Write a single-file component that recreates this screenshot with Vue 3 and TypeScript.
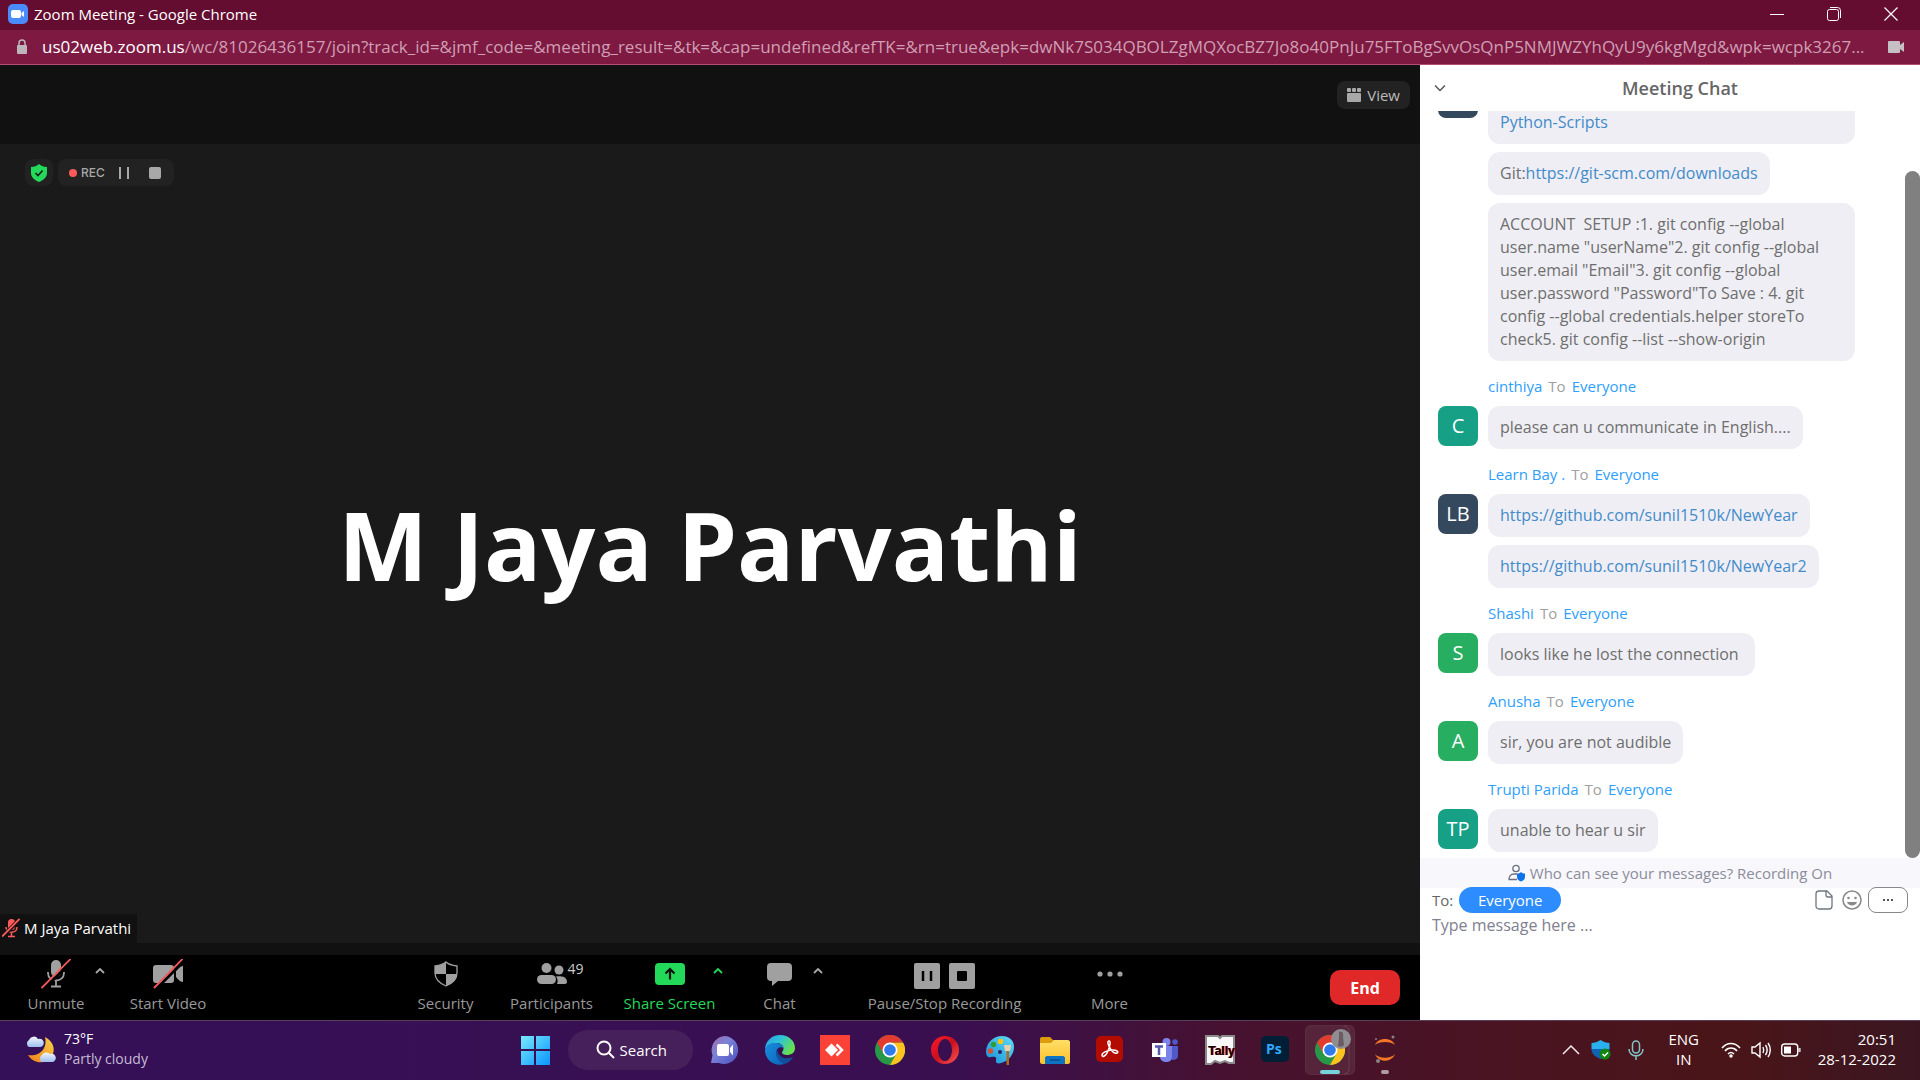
<script setup lang="ts">
import { ref } from 'vue'

interface Part {
  text: string
  href?: string
}
interface Message {
  from?: string
  initials: string
  color: string
  bubbles: Part[][]
  clipped?: boolean
}

const draft = ref('')

const messages: Message[] = [
  {
    initials: '',
    color: '#34495e',
    clipped: true,
    bubbles: [[{ text: 'Python-Scripts', href: '#python-scripts' }]],
  },
  {
    initials: '',
    color: 'transparent',
    bubbles: [
      [{ text: 'Git:' }, { text: 'https://git-scm.com/downloads', href: 'https://git-scm.com/downloads' }],
      [
        {
          text: 'ACCOUNT  SETUP :1. git config --global user.name "userName"2. git config --global user.email "Email"3. git config --global user.password "Password"To Save : 4. git config --global credentials.helper storeTo check5. git config --list --show-origin',
        },
      ],
    ],
  },
  { from: 'cinthiya', initials: 'C', color: '#16a085', bubbles: [[{ text: 'please can u communicate in English....' }]] },
  {
    from: 'Learn Bay .',
    initials: 'LB',
    color: '#34495e',
    bubbles: [
      [{ text: 'https://github.com/sunil1510k/NewYear', href: 'https://github.com/sunil1510k/NewYear' }],
      [{ text: 'https://github.com/sunil1510k/NewYear2', href: 'https://github.com/sunil1510k/NewYear2' }],
    ],
  },
  { from: 'Shashi', initials: 'S', color: '#27ae60', bubbles: [[{ text: 'looks like he lost the connection ' }]] },
  { from: 'Anusha', initials: 'A', color: '#27ae60', bubbles: [[{ text: 'sir, you are not audible' }]] },
  { from: 'Trupti Parida', initials: 'TP', color: '#16a085', bubbles: [[{ text: 'unable to hear u sir' }]] },
]
</script>

<template>
  <div class="screen">
    <header class="titlebar">
      <svg class="app-icon" viewBox="0 0 20 20" width="20" height="20">
        <rect width="20" height="20" rx="5" fill="#4a8cff" />
        <rect x="3" y="6" width="10" height="8" rx="2" fill="#fff" />
        <path d="M13.500 9 16 7v6l-2.500-2z" fill="#fff" />
      </svg>
      <span class="window-title">Zoom Meeting - Google Chrome</span>
      <div class="window-controls">
        <button aria-label="Minimize">
          <svg viewBox="0 0 14 14" width="14" height="14"><path d="M0 7.500h14" stroke="#fff" /></svg>
        </button>
        <button aria-label="Restore">
          <svg viewBox="0 0 14 14" width="14" height="14" fill="none" stroke="#fff">
            <rect x=".5" y="2.500" width="11" height="11" rx="2" />
            <path d="M3 .500h7.500a3 3 0 0 1 3 3V11" />
          </svg>
        </button>
        <button aria-label="Close">
          <svg viewBox="0 0 14 14" width="14" height="14"><path d="M.5.5l13 13M13.500.500l-13 13" stroke="#fff" stroke-width="1.200" /></svg>
        </button>
      </div>
    </header>

    <div class="urlbar">
      <svg viewBox="0 0 12 16" width="12" height="16">
        <rect x="1" y="6" width="10" height="9" rx="1" fill="#bdb5ba" />
        <path d="M3 6V4a3 3 0 0 1 6 0v2" fill="none" stroke="#bdb5ba" stroke-width="1.500" />
      </svg>
      <div class="url"><b>us02web.zoom.us</b>/wc/81026436157/join?track_id=&amp;jmf_code=&amp;meeting_result=&amp;tk=&amp;cap=undefined&amp;refTK=&amp;rn=true&amp;epk=dwNk7S034QBOLZgMQXocBZ7Jo8o40PnJu75FToBgSvvOsQnP5NMJWZYhQyU9y6kgMgd&amp;wpk=wcpk3267...</div>
      <svg class="cam" viewBox="0 0 16 12" width="16" height="12">
        <path d="M1 0h10a1 1 0 0 1 1 1v3l4-3v10l-4-3v3a1 1 0 0 1-1 1H1a1 1 0 0 1-1-1V1a1 1 0 0 1 1-1z" fill="#c6c0c4" />
      </svg>
    </div>

    <main class="meeting">
      <section class="stage">
        <div class="stage-top">
          <button class="view-button">
            <svg viewBox="0 0 14 14" width="14" height="14" fill="#a8a8a8">
              <rect width="4" height="4" rx="1" /><rect x="5" width="4" height="4" rx="1" /><rect x="10" width="4" height="4" rx="1" />
              <rect y="5" width="14" height="9" rx="1" />
            </svg>
            View
          </button>
        </div>

        <div class="video">
          <div class="chips">
            <button class="chip shield" aria-label="Meeting is encrypted">
              <svg viewBox="0 0 16 18" width="16" height="18">
                <path d="M8 0c2 2 5 3 8 3v6c0 4-3 7-8 9-5-2-8-5-8-9V3c3 0 6-1 8-3z" fill="#23d959" />
                <path d="M4.500 9 7 11.500l4.500-5" fill="none" stroke="#1a1a1a" stroke-width="1.600" />
              </svg>
            </button>
            <div class="chip rec">
              <i class="dot"></i><span>REC</span>
              <button class="pause" aria-label="Pause recording"></button>
              <button class="stop" aria-label="Stop recording"></button>
            </div>
          </div>
          <h1>M Jaya Parvathi</h1>
          <div class="nameplate">
            <svg viewBox="0 0 18 20" width="18" height="20">
              <rect x="6" y="1" width="7" height="11" rx="3.500" fill="#ff5a5a" />
              <path d="M4 9c0 7 11 7 11 0M9.500 14v4M6 18.500h7" fill="none" stroke="#ff5a5a" stroke-width="1.500" />
              <path d="M1 18 17 2" stroke="#111" stroke-width="4" />
              <path d="M0 18.500 17.500 1" stroke="#ff5a5a" stroke-width="1.800" />
            </svg>
            M Jaya Parvathi
          </div>
        </div>

        <nav class="toolbar">
          <div class="tools">
            <button class="tool w80">
              <svg viewBox="0 0 30 30" width="30" height="30" fill="none">
                <rect x="10" y="1" width="10" height="17" rx="5" fill="#a0a0a0" />
                <path d="M7 13v1c0 10 16 10 16 0v-1M15 22v5M10 27.500h10" stroke="#a0a0a0" stroke-width="1.800" />
                <path d="M3 30 31 2" stroke="#000" stroke-width="3" />
                <path d="M.5 29 29.500 0" stroke="#f4595b" stroke-width="1.800" />
              </svg>
              <span>Unmute</span>
            </button>
            <button class="caret after-mute" aria-label="Audio options"><svg viewBox="0 0 10 6" width="10" height="6"><path d="M1 5l4-4 4 4" /></svg></button>
            <button class="tool w100">
              <svg viewBox="0 0 30 30" width="30" height="30">
                <rect x="0" y="6" width="21" height="18" rx="3" fill="#a0a0a0" />
                <path d="M23 12c2-2 4-5 7-5v16c-3 0-5-3-7-5z" fill="#a0a0a0" />
                <path d="M3 30 31 2" stroke="#000" stroke-width="3" />
                <path d="M1 29 29.500 0" stroke="#f4595b" stroke-width="1.800" />
              </svg>
              <span>Start Video</span>
            </button>
          </div>

          <div class="tools middle">
            <button class="tool w80">
              <svg viewBox="0 0 30 30" width="30" height="30">
                <path d="M15 3c3 3 7 3.500 11 4v7c0 6-4 10-11 13C8 24 4 20 4 14V7c4-.5 8-1 11-4z" fill="none" stroke="#a0a0a0" stroke-width="1.300" />
                <path d="M15 3v12H4V7c4-.5 8-1 11-4zM15 15h11c0 6-4 9-11 12z" fill="#a0a0a0" />
              </svg>
              <span>Security</span>
            </button>
            <button class="tool w100 after">
              <svg viewBox="0 0 30 30" width="30" height="30" fill="#a0a0a0">
                <circle cx="9.500" cy="9" r="5" /><circle cx="22" cy="11" r="4.500" />
                <rect x="0" y="16" width="19" height="9" rx="4.500" />
                <path d="M19 17.500c3-.5 6-.5 8 .5 2 1 3 3 3 5 0 1-1 2-2 2h-8c1-2 1-5-1-7.500z" />
              </svg>
              <em class="count">49</em>
              <span>Participants</span>
            </button>
            <button class="tool w100 share after">
              <svg viewBox="0 0 30 30" width="30" height="30">
                <rect y="4" width="30" height="22" rx="4" fill="#23d959" />
                <path d="M15 20.500V10M10.500 14.500 15 10l4.500 4.500" fill="none" stroke="#111" stroke-width="2.200" />
              </svg>
              <span>Share Screen</span>
            </button>
            <button class="caret green" aria-label="Share options"><svg viewBox="0 0 10 6" width="10" height="6"><path d="M1 5l4-4 4 4" /></svg></button>
            <button class="tool w40 chat-tool">
              <svg viewBox="0 0 30 30" width="30" height="30">
                <path d="M6 4h17a4 4 0 0 1 4 4v10a4 4 0 0 1-4 4H13l-6 5v-5H6a4 4 0 0 1-4-4V8a4 4 0 0 1 4-4z" fill="#a0a0a0" />
              </svg>
              <span>Chat</span>
            </button>
            <button class="caret after-chat" aria-label="Chat options"><svg viewBox="0 0 10 6" width="10" height="6"><path d="M1 5l4-4 4 4" /></svg></button>
            <button class="tool w160">
              <svg viewBox="0 0 62 30" width="62" height="30">
                <rect x="0" y="4" width="26" height="26" rx="2" fill="#a0a0a0" />
                <rect x="35" y="4" width="26" height="26" rx="2" fill="#a0a0a0" />
                <path d="M9 12v10M17 12v10" stroke="#000" stroke-width="2.500" />
                <rect x="43" y="12" width="10" height="10" rx="1" fill="#000" />
              </svg>
              <span>Pause/Stop Recording</span>
            </button>
            <button class="tool w50 more">
              <svg viewBox="0 0 30 30" width="30" height="30" fill="#a0a0a0">
                <circle cx="5" cy="15" r="2.600" /><circle cx="15" cy="15" r="2.600" /><circle cx="25" cy="15" r="2.600" />
              </svg>
              <span>More</span>
            </button>
          </div>

          <button class="end">End</button>
        </nav>
      </section>

      <aside class="chat">
        <div class="chat-head">
          <button aria-label="Collapse chat"><svg viewBox="0 0 12 8" width="12" height="8"><path d="M1 1.500l5 5 5-5" fill="none" stroke="#555" stroke-width="1.500" /></svg></button>
          <h2>Meeting Chat</h2>
        </div>

        <div class="chat-body">
          <div class="messages">
            <article v-for="(m, i) in messages" :key="i" class="group">
              <p v-if="m.from" class="sender"><a href="#sender">{{ m.from }}</a><span>To</span><a href="#everyone">Everyone</a></p>
              <div class="row">
                <div class="avatar" :style="{ background: m.color }">{{ m.initials }}</div>
                <div class="bubbles">
                  <div v-for="(b, j) in m.bubbles" :key="j" class="bubble" :class="{ tall: m.clipped }"><template v-for="(p, k) in b" :key="k"><a v-if="p.href" :href="p.href">{{ p.text }}</a><template v-else>{{ p.text }}</template></template></div>
                </div>
              </div>
            </article>
          </div>
          <div class="track"><div class="thumb"></div></div>
        </div>

        <div class="privacy">
          <svg viewBox="0 0 18 18" width="18" height="18">
            <circle cx="8" cy="4.500" r="3.200" fill="none" stroke="#6e6e80" stroke-width="1.300" />
            <path d="M9 10H6c-3 0-5 2-5 5.500h8" fill="none" stroke="#6e6e80" stroke-width="1.300" />
            <path d="M13 8c1 1 2.500 1.500 4 1.500V13c0 2-1.500 3.500-4 4.500-2.500-1-4-2.500-4-4.500V9.500C10.500 9.500 12 9 13 8z" fill="#0e72ed" />
          </svg>
          Who can see your messages? Recording On
        </div>

        <div class="composer">
          <div class="to-row">
            <span>To:</span>
            <button class="pill">Everyone</button>
            <div class="composer-actions">
              <button aria-label="Attach file">
                <svg viewBox="0 0 18 20" width="18" height="20" fill="none" stroke="#6e7680" stroke-width="1.300">
                  <path d="M4 1h8l5 5v10a3 3 0 0 1-3 3H4a3 3 0 0 1-3-3V4a3 3 0 0 1 3-3z" /><path d="M11 1v4a2 2 0 0 0 2 2h4" />
                </svg>
              </button>
              <button class="emoji" aria-label="Emoji">
                <svg viewBox="0 0 20 20" width="20" height="20">
                  <circle cx="10" cy="10" r="9" fill="none" stroke="#8a8a8a" stroke-width="1.600" />
                  <circle cx="6.500" cy="8" r="1.300" fill="#8a8a8a" /><circle cx="13.500" cy="8" r="1.300" fill="#8a8a8a" />
                  <path d="M5 12h10c-1 4.500-9 4.500-10 0z" fill="#8a8a8a" />
                </svg>
              </button>
              <button class="dots" aria-label="More options">
                <svg viewBox="0 0 12 4" width="12" height="4" fill="#555"><rect x="1" y="1" width="2" height="2" /><rect x="5" y="1" width="2" height="2" /><rect x="9" y="1" width="2" height="2" /></svg>
              </button>
            </div>
          </div>
          <textarea v-model="draft" placeholder="Type message here ..." aria-label="Message"></textarea>
        </div>
      </aside>
    </main>

    <footer class="taskbar">
      <button class="weather">
        <svg viewBox="0 0 32 32" width="32" height="32">
          <defs>
            <linearGradient id="moon" x1="0" y1="1" x2="1" y2="0"><stop offset="0" stop-color="#f07f1c" /><stop offset="1" stop-color="#f8d348" /></linearGradient>
            <linearGradient id="cloud" x1="0" y1="0" x2="0" y2="1"><stop offset="0" stop-color="#f2f6fe" /><stop offset="1" stop-color="#9dbdf0" /></linearGradient>
          </defs>
          <path d="M21 3c8 4 11 12 7 19-5 8-18 9-24-1 10 2 20-5 17-18z" fill="url(#moon)" />
          <path d="M5 13a4 4 0 0 1 0-7 5 5 0 0 1 9-1 4 4 0 0 1 3 8z" fill="url(#cloud)" />
          <path d="M18 28a4 4 0 0 1 0-7 5 5 0 0 1 8-1 4 4 0 0 1 3 8z" fill="url(#cloud)" />
        </svg>
        <span class="weather-text"><b>73°F</b><small>Partly cloudy</small></span>
      </button>

      <div class="apps">
        <button class="app" aria-label="Start">
          <svg viewBox="0 0 30 30" width="30" height="30">
            <defs><linearGradient id="win" gradientUnits="userSpaceOnUse" x1="0" y1="0" x2="30" y2="30"><stop offset="0" stop-color="#7deefc" /><stop offset="1" stop-color="#0a93ff" /></linearGradient></defs>
            <path d="M1 1h13v13H1zM16 1h14v13H16zM1 16h13v14H1zM16 16h14v14H16z" fill="url(#win)" />
          </svg>
        </button>
        <button class="search">
          <svg viewBox="0 0 20 20" width="20" height="20" fill="none" stroke="#fff" stroke-width="2"><circle cx="8" cy="8" r="6.500" /><path d="M12.500 12.500 18 18" /></svg>
          Search
        </button>
        <button class="app" aria-label="Chat">
          <svg viewBox="0 0 30 30" width="30" height="30">
            <defs><linearGradient id="tc" x1="0" y1="0" x2="1" y2="1"><stop offset="0" stop-color="#a46aa8" /><stop offset=".4" stop-color="#7b83d8" /><stop offset="1" stop-color="#4a4fc0" /></linearGradient></defs>
            <path d="M15 1a14 14 0 1 1-6 27H1l1.500-8A14 14 0 0 1 15 1z" fill="url(#tc)" />
            <rect x="7" y="9" width="12" height="12" rx="2" fill="#fff" /><path d="M20 13l3-3.500v11L20 17z" fill="#fff" />
          </svg>
        </button>
        <button class="app" aria-label="Edge">
          <svg viewBox="0 0 30 30" width="30" height="30">
            <defs>
              <linearGradient id="e1" x1="0" y1="0" x2="1" y2=".5"><stop offset="0" stop-color="#2a9de8" /><stop offset=".5" stop-color="#2fc3d8" /><stop offset="1" stop-color="#66e04e" /></linearGradient>
              <linearGradient id="e2" x1="0" y1="0" x2="1" y2="1"><stop offset="0" stop-color="#1a8ee0" /><stop offset="1" stop-color="#0a63b8" /></linearGradient>
            </defs>
            <path d="M0 15C0 6 7 0 15 0c9 0 15 6 15 13 0 5-4 7-8 7-3 0-5-1-5-2.500 0-1 1.500-1.500 1.500-4C18.500 10 15 8 11 8 5 8 1 11 0 15z" fill="url(#e1)" />
            <path d="M0 15c1-5 5-7 10-7 5 0 8.500 2.500 8.500 5-4-2-7 .5-7 4.500 0 5 4 9 8 11.500C9 32 0 25 0 15z" fill="url(#e2)" />
            <path d="M12 14c-3 6 1 12 7.500 15 4-1 7-4 8.500-7-7 3-15 1-16-8z" fill="#134f9c" />
          </svg>
        </button>
        <button class="app" aria-label="AnyDesk">
          <svg viewBox="0 0 30 30" width="30" height="30">
            <rect width="30" height="30" fill="#fb4236" /><path d="M5 15l6.500-6.500L18 15l-6.500 6.500z" fill="#fff" /><path d="M16.500 9.500 22 15l-5.500 5.500" fill="none" stroke="#fff" stroke-width="2.500" />
          </svg>
        </button>
        <button class="app" aria-label="Chrome">
          <svg viewBox="0 0 30 30" width="30" height="30">
            <circle cx="15" cy="15" r="15" fill="#279847" />
            <path d="M15 30 21.500 18.700 15 7.500H28A15 15 0 0 1 15 30z" fill="#fcc31e" />
            <path d="M2 7.500A15 15 0 0 1 28 7.500H15L8.500 18.700z" fill="#e23c30" />
            <circle cx="15" cy="15" r="7.500" fill="#fff" /><circle cx="15" cy="15" r="5.800" fill="#2f7bee" />
          </svg>
        </button>
        <button class="app" aria-label="Opera">
          <svg viewBox="0 0 30 30" width="30" height="30">
            <defs><linearGradient id="op" x1="0" y1="0" x2="1" y2="1"><stop offset="0" stop-color="#ff1b2d" /><stop offset=".5" stop-color="#c8101e" /><stop offset="1" stop-color="#ff5a55" /></linearGradient></defs>
            <path fill-rule="evenodd" d="M15 1a14 14 0 1 0 0 28 14 14 0 1 0 0-28zM15 4c4 0 7 5 7 11s-3 11-7 11-7-5-7-11 3-11 7-11z" fill="url(#op)" />
          </svg>
        </button>
        <button class="app" aria-label="Paint">
          <svg viewBox="0 0 30 30" width="30" height="30">
            <defs><linearGradient id="pt" x1="0" y1="1" x2="1" y2="0"><stop offset="0" stop-color="#178ed8" /><stop offset="1" stop-color="#5fdcf6" /></linearGradient></defs>
            <path d="M17 1C8 1 1 8 1 17c0 4 2 6 5 5 4-1 6 0 5 3-1 3 2 4 5 3 8-2 13-9 13-16 0-7-5-11-12-11z" fill="url(#pt)" />
            <circle cx="15.500" cy="6.500" r="2.700" fill="#ffc40c" /><circle cx="8.500" cy="9.500" r="2.700" fill="#2f9d33" /><circle cx="5.500" cy="16" r="2.700" fill="#d65230" /><circle cx="15" cy="17" r="2" fill="#2a2260" />
            <path d="M19 10h7l-1 6h-5z" fill="#e9cfae" /><path d="M21.500 16h2.500v14h-2.500z" fill="#b06a1c" />
          </svg>
        </button>
        <button class="app" aria-label="File Explorer">
          <svg viewBox="0 0 30 30" width="30" height="30">
            <defs><linearGradient id="fd" x1="0" y1="0" x2="0" y2="1"><stop offset="0" stop-color="#ffdf68" /><stop offset="1" stop-color="#fcc02a" /></linearGradient></defs>
            <path d="M0 4c0-1 .5-2 2-2h8l3 3h15v7H0z" fill="#dc9c0c" /><path d="M0 8h11l3-3h14c1 0 2 1 2 2v20c0 1-1 2-2 2H2c-1 0-2-1-2-2z" fill="url(#fd)" />
            <path d="M5 29v-6c0-1 1-2 2-2h16c1 0 2 1 2 2v6z" fill="#0f73c4" /><path d="M10 25h10" stroke="#0a4c90" stroke-width="1.500" />
          </svg>
        </button>
        <button class="app" aria-label="Acrobat">
          <svg viewBox="0 0 30 30" width="30" height="30">
            <rect x="1" y="1" width="27" height="26" rx="5" fill="#b30b00" />
            <path d="M14 6c-2 0-1 4 1 7 2 4 5 6 7 5s0-3-4-3-11 2-11 5 4 1 6-4 3-10 1-10z" fill="none" stroke="#fff" stroke-width="1.500" />
          </svg>
        </button>
        <button class="app" aria-label="Teams">
          <svg viewBox="0 0 30 30" width="30" height="30">
            <circle cx="16.500" cy="7" r="4" fill="#7b83eb" /><circle cx="25" cy="7" r="2.800" fill="#5059c9" />
            <path d="M20 11h8v10c0 3-3 4-6 4z" fill="#5059c9" /><path d="M10 11h12v11c0 4-3 5-6 5s-6-2-6-5z" fill="#7b83eb" />
            <rect x="2" y="8" width="14" height="14" fill="#fff" /><path d="M5 11.500h8M9 11.500V20" stroke="#5558af" stroke-width="2.500" />
          </svg>
        </button>
        <button class="app" aria-label="Tally">
          <svg viewBox="0 0 30 30" width="30" height="30">
            <path d="M1 1h12l2 2 2-2h12v27h-5l-4-2-5 2-5-2-4 3H1z" fill="#f8f8f8" stroke="#8a8a8a" stroke-width="2" />
            <text x="4" y="20" class="tally red">Tally</text><text x="3" y="20" class="tally">Tally</text>
          </svg>
        </button>
        <button class="app" aria-label="Photoshop">
          <svg viewBox="0 0 30 30" width="30" height="30"><rect x="1" y="1" width="28" height="26" rx="5" fill="#001e36" /><text x="6" y="19" class="ps">Ps</text></svg>
        </button>
        <button class="app active" aria-label="Chrome, meeting window">
          <svg viewBox="0 0 50 50" width="50" height="50">
            <rect x=".5" y=".5" width="49" height="49" rx="5" fill="#fff" fill-opacity=".08" stroke="#fff" stroke-opacity=".08" />
            <path d="M39 1a5 5 0 0 1 5 5v38a5 5 0 0 1-5 5" fill="none" stroke="#fff" stroke-opacity=".12" />
            <g transform="translate(10 10)">
              <circle cx="15" cy="15" r="15" fill="#279847" />
              <path d="M15 30 21.500 18.700 15 7.500H28A15 15 0 0 1 15 30z" fill="#fcc31e" />
              <path d="M2 7.500A15 15 0 0 1 28 7.500H15L8.500 18.700z" fill="#e23c30" />
              <circle cx="15" cy="15" r="7.500" fill="#fff" /><circle cx="15" cy="15" r="5.800" fill="#2f7bee" />
            </g>
            <circle cx="36" cy="14" r="10" fill="#8f8d90" /><path d="M34 7c3-1 5 1 4 5l1 8c-2 2-4 2-6 1l1-8z" fill="#6b5a62" />
            <rect x="15" y="45" width="20" height="4" rx="2" fill="#76d3dc" />
          </svg>
        </button>
        <button class="app" aria-label="Jupyter">
          <svg viewBox="0 0 30 50" width="30" height="50">
            <path d="M5 20c3-8 17-8 20 0-4-4-16-4-20 0zM5 29c3 9 17 9 20 0-4 5-16 5-20 0z" fill="#f37726" />
            <circle cx="23" cy="12" r="1.500" fill="#8a8386" /><circle cx="6" cy="14" r="1" fill="#8a8386" /><circle cx="8" cy="36" r="2" fill="#8a8386" />
            <rect x="11" y="45" width="8" height="4" rx="2" fill="#b09aa4" />
          </svg>
        </button>
      </div>

      <div class="tray">
        <button aria-label="Show hidden icons"><svg viewBox="0 0 18 10" width="18" height="10"><path d="M1 9l8-8 8 8" fill="none" stroke="#f2e8ec" stroke-width="1.500" /></svg></button>
        <button class="defender" aria-label="Security status">
          <svg viewBox="0 0 20 20" width="20" height="20">
            <path d="M9.500 0c3 2 6 3 9 3v6H.5V3c3 0 6-1 9-3z" fill="#2bb0ee" /><path d="M.5 9h18c0 5-4 8-9 10-5-2-9-5-9-10z" fill="#0f62b4" />
            <circle cx="14" cy="14" r="5.500" fill="#108510" /><path d="M11.500 14l2 2 3.500-3.500" fill="none" stroke="#fff" stroke-width="1.500" />
          </svg>
        </button>
        <button class="mic" aria-label="Microphone in use">
          <svg viewBox="0 0 16 20" width="16" height="20" fill="none" stroke="#7fc4c8" stroke-width="1.500"><rect x="4.500" y="1" width="7" height="12" rx="3.500" /><path d="M1 9c0 9 14 9 14 0M8 16v4" /></svg>
        </button>
        <button class="lang">ENG<br />IN</button>
        <button class="status" aria-label="Network, volume and battery">
          <svg viewBox="0 0 20 16" width="20" height="16" fill="none" stroke="#fff" stroke-width="1.500"><path d="M1 6c5-6 13-6 18 0M4 9c3-4 9-4 12 0M7 12c2-2 4-2 6 0" /><circle cx="10" cy="14" r="1" fill="#fff" /></svg>
          <svg viewBox="0 0 20 18" width="20" height="18" fill="none" stroke="#fff" stroke-width="1.400"><path d="M1 6h3l5-4v14l-5-4H1zM12 6c1 2 1 4 0 6M14.500 4c2 3 2 7 0 10M17 2c3 4 3 10 0 14" /></svg>
          <svg viewBox="0 0 20 14" width="20" height="14"><rect x=".7" y="1" width="16" height="12" rx="3" fill="none" stroke="#fff" stroke-width="1.400" /><rect x="3" y="3.500" width="7" height="7" fill="#fff" /><path d="M18 5v4M19 5v4" stroke="#fff" /></svg>
        </button>
        <button class="clock">20:51<br />28-12-2022</button>
      </div>
    </footer>
  </div>
</template>

<style>
body {
  margin: 0;
}
</style>

<style scoped>
.screen {
  display: flex;
  flex-direction: column;
  height: 100vh;
  overflow: hidden;
  font-family: 'Open Sans', 'Noto Sans', sans-serif;
  font-size: 15px;
}
.screen * {
  box-sizing: border-box;
}
button {
  padding: 0;
  border: 0;
  background: none;
  color: inherit;
  font: inherit;
}
svg {
  display: block;
  flex: none;
}
a {
  color: #428bca;
  text-decoration: none;
}

.titlebar {
  display: flex;
  align-items: center;
  flex: none;
  height: 30px;
  padding: 0 1px 2px 8px;
  background: #640d30;
  color: #fff;
}
.window-title {
  margin-left: 6px;
  font-size: 15px;
}
.window-controls {
  display: flex;
  margin-left: auto;
}
.window-controls button {
  display: grid;
  place-items: center;
  width: 57px;
  height: 28px;
}
.urlbar {
  display: flex;
  align-items: center;
  flex: none;
  height: 35px;
  padding: 0 16px;
  background: #7e1942;
  border-bottom: 1px solid #b84c78;
}
.url {
  flex: 1;
  min-width: 0;
  margin: 0 16px 0 14px;
  overflow: hidden;
  color: #cf9fb3;
  font-size: 17px;
  line-height: 26px;
  white-space: nowrap;
}
.url b {
  color: #fff;
  font-weight: 400;
}

.meeting {
  display: flex;
  flex: 1;
  min-height: 0;
}
.stage {
  display: flex;
  flex: 1;
  flex-direction: column;
  min-width: 0;
  background: #111;
}
.stage-top {
  display: flex;
  align-items: flex-start;
  justify-content: flex-end;
  height: 79px;
  padding: 16px 10px 0 0;
}
.view-button {
  display: flex;
  align-items: center;
  gap: 6px;
  height: 28px;
  padding: 0 10px;
  border-radius: 8px;
  background: #222;
  color: #bababa;
}
.video {
  position: relative;
  display: flex;
  flex: 1;
  align-items: center;
  justify-content: center;
  margin-bottom: 12px;
  background: #1a1a1a;
}
h1 {
  margin: 0;
  color: #fff;
  font-size: 95px;
  font-weight: 700;
  line-height: 130px;
  white-space: nowrap;
}
.chips {
  position: absolute;
  top: 15px;
  left: 25px;
  display: flex;
  gap: 5px;
}
.chip {
  display: flex;
  align-items: center;
  height: 27px;
  border-radius: 8px;
  background: #222;
}
.shield {
  justify-content: center;
  width: 28px;
}
.rec {
  width: 116px;
  padding-left: 11px;
  color: #a8a8a8;
  font: 500 12px/16px Inter, sans-serif;
}
.dot {
  width: 8px;
  height: 8px;
  margin-right: 4px;
  border-radius: 50%;
  background: #ff5a5a;
}
.pause {
  width: 10px;
  height: 12px;
  margin-left: 14px;
  border: solid #a8a8a8;
  border-width: 0 2px;
}
.stop {
  width: 12px;
  height: 12px;
  margin-left: 20px;
  border-radius: 2px;
  background: #a8a8a8;
}
.nameplate {
  position: absolute;
  bottom: 0;
  left: 0;
  display: flex;
  align-items: center;
  gap: 4px;
  height: 29px;
  padding: 0 6px 2px 2px;
  background: #111;
  color: #fff;
}

.toolbar {
  display: flex;
  align-items: flex-start;
  flex: none;
  height: 65px;
  padding: 0 20px 0 16px;
  background: #000;
  color: #999;
}
.tools {
  display: flex;
  align-items: flex-start;
}
.middle {
  margin: 0 auto;
  padding-right: 8px;
}
.tool {
  position: relative;
  display: flex;
  flex-direction: column;
  align-items: center;
  gap: 4px;
  padding-top: 4px;
  line-height: 20px;
  white-space: nowrap;
}
.w40 { width: 40px; }
.w50 { width: 50px; }
.w80 { width: 80px; }
.w100 { width: 100px; }
.w160 { width: 160px; }
.after {
  margin-left: 16px;
}
.count {
  position: absolute;
  top: 4px;
  left: 66px;
  color: #ccc;
  font-size: 14px;
  font-style: normal;
}
.share {
  margin-left: 18px;
  color: #23d959;
}
.caret {
  width: 16px;
  height: 16px;
  padding: 5px 3px;
  margin-top: 8px;
  margin-left: -10px;
}
.caret path {
  fill: none;
  stroke: #a8a8a8;
  stroke-width: 1.8;
}
.green path {
  stroke: #23d959;
}
.after-mute {
  margin-left: -4px;
  margin-right: 10px;
}
.chat-tool {
  margin-left: 34px;
}
.after-chat {
  margin-left: 10px;
  margin-right: 39px;
}
.more {
  margin-left: 60px;
}
.end {
  width: 70px;
  height: 35px;
  margin-top: 15px;
  border-radius: 10px;
  background: #e02828;
  color: #fff;
  font-size: 16px;
  font-weight: 700;
}

.chat {
  display: flex;
  flex: none;
  flex-direction: column;
  width: 500px;
  background: #fff;
}
.chat-head {
  display: flex;
  align-items: center;
  height: 46px;
  padding-left: 14px;
}
.chat-head button {
  width: 12px;
}
h2 {
  flex: 1;
  margin: 0;
  padding-right: 6px;
  color: #666;
  font-size: 18px;
  font-weight: 600;
  text-align: center;
}
.chat-body {
  display: flex;
  flex: 1;
  min-height: 0;
}
.messages {
  display: flex;
  flex: 1;
  flex-direction: column;
  justify-content: flex-end;
  min-width: 0;
  padding: 0 50px 6px 18px;
  overflow: hidden;
}
.group {
  flex: none;
}
.group + .group {
  margin-top: 8px;
}
.sender {
  display: flex;
  gap: 6px;
  height: 37px;
  margin: 0 0 0 50px;
  padding-top: 6px;
  font-size: 15px;
  line-height: 22px;
}
.sender a {
  color: #2ea0fb;
}
.sender span {
  color: #a0a0a0;
}
.row {
  display: flex;
  align-items: flex-start;
  gap: 10px;
}
.avatar {
  flex: none;
  width: 40px;
  height: 40px;
  border-radius: 8px;
  color: #fff;
  font-size: 20px;
  line-height: 39px;
  text-align: center;
}
.bubbles {
  display: flex;
  flex: 1;
  flex-direction: column;
  align-items: flex-start;
  gap: 8px;
  min-width: 0;
}
.bubble {
  max-width: 367px;
  padding: 10px 12px;
  border-radius: 12px;
  background: #efeef4;
  color: #6e6e6e;
  font-size: 16px;
  line-height: 23px;
  white-space: pre-wrap;
}
.tall {
  display: flex;
  align-items: flex-end;
  width: 367px;
  height: 66px;
}
.track {
  width: 15px;
  padding-top: 60px;
}
.thumb {
  height: 100%;
  border-radius: 8px;
  background: #808080;
}
.privacy {
  display: flex;
  align-items: center;
  justify-content: center;
  gap: 4px;
  flex: none;
  height: 30px;
  background: #f7f7fc;
  color: #8c8c9a;
  font-size: 15px;
}
.composer {
  display: flex;
  flex: none;
  flex-direction: column;
  height: 132px;
  padding: 0 12px;
}
.to-row {
  display: flex;
  align-items: center;
  height: 26px;
  margin: -1px 0 1px;
  color: #666;
}
.pill {
  width: 102px;
  height: 26px;
  margin-left: 6px;
  border-radius: 13px;
  background: #2d8cff;
  color: #fff;
}
.composer-actions {
  display: flex;
  align-items: center;
  margin-left: auto;
}
.emoji {
  margin: 0 6px 0 9px;
}
.dots {
  display: grid;
  place-items: center;
  width: 40px;
  height: 26px;
  border: 1px solid #888;
  border-radius: 8px;
}
textarea {
  flex: 1;
  padding: 0;
  border: 0;
  outline: 0;
  background: none;
  color: #333;
  font: 400 16px/22px 'Open Sans', sans-serif;
  resize: none;
}
textarea::placeholder {
  color: #80808f;
}

.taskbar {
  display: grid;
  grid-template-columns: 1fr auto 1fr;
  align-items: center;
  flex: none;
  height: 60px;
  padding-bottom: 1px;
  border-top: 1px solid #5a3f5c;
  background: linear-gradient(90deg, #341058 0%, #3a0f50 50%, #47122e 65%, #4a1420 80%, #4a1518 90%, #3b1621 100%);
  color: #fff;
  line-height: 20px;
}
.weather {
  display: flex;
  align-items: center;
  gap: 8px;
  padding-left: 24px;
  text-align: left;
}
.weather-text {
  display: flex;
  flex-direction: column;
  padding-bottom: 2px;
  font-size: 14px;
}
.weather-text b {
  font-weight: 400;
}
.weather-text small {
  color: #c7bbd3;
  font-size: 14px;
}
.apps {
  display: flex;
  align-items: center;
}
.app {
  display: grid;
  place-items: center;
  width: 55px;
  height: 50px;
}
.search {
  display: flex;
  align-items: center;
  gap: 4px;
  width: 125px;
  height: 40px;
  margin: 0 5px;
  padding-left: 28px;
  border-radius: 20px;
  background: #46205a;
}
.tally {
  font: 700 12px 'Liberation Sans', sans-serif;
}
.red {
  fill: #e01020;
}
.ps {
  fill: #31a8ff;
  font: 700 14px 'Open Sans', sans-serif;
}
.tray {
  display: flex;
  align-items: center;
  justify-content: flex-end;
  padding-right: 24px;
}
.defender {
  margin-left: 11px;
}
.mic {
  margin-left: 17px;
}
.lang {
  width: 40px;
  margin-left: 20px;
  padding-bottom: 2px;
}
.status {
  display: flex;
  align-items: center;
  gap: 10px;
  width: 97px;
  margin-left: 17px;
}
.clock {
  padding-bottom: 2px;
  text-align: right;
}
</style>
